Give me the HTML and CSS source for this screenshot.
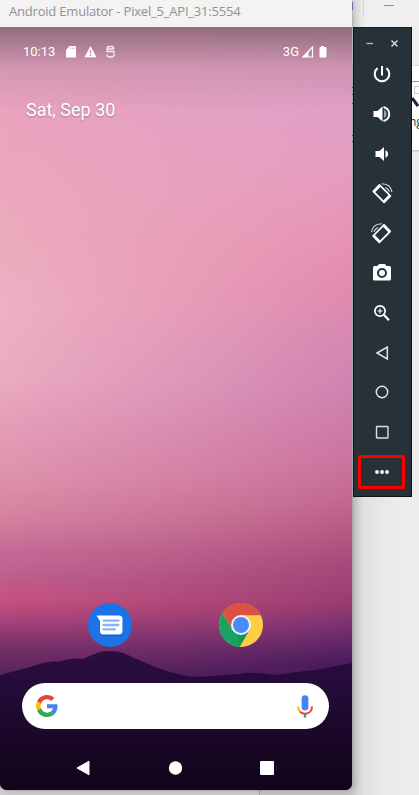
FILE: index.html
```html
<!DOCTYPE html>
<html lang="en">
<head>
<meta charset="utf-8">
<title>Android Emulator</title>
<link rel="stylesheet" href="styles.css">
</head>
<body>
<div class="desktop">
  <div class="background-window">
    <span class="accent"></span><span class="divider"></span><span class="minimize"></span>
    <div class="side-card"><div class="card-head"></div>
      <svg class="card-art" width="7" height="34" viewBox="412 82 7 34"><path d="M412 98l6 8" stroke="#23213d" stroke-width="3"/><rect x="414.500" y="86.500" width="8" height="7" fill="none" stroke="#ccc"/></svg>
      <span class="card-label">ng</span>
    </div>
    <svg class="edge-marks" width="2" height="60" viewBox="0 0 2 60"><path d="M1 2v1m0 6v1m0 8v1m0 31v1m0 5v1" stroke="#51545a" stroke-width="2"/></svg>
    <span class="lower-pane"></span>
  </div>
  <main class="emulator">
    <header class="titlebar">Android Emulator - Pixel_5_API_31:5554</header>
    <section class="screen">
      <div class="sky"></div><div class="sky sky-right"></div><div class="scrim"></div>
      <svg class="hills" width="352" height="140" viewBox="0 650 352 140">
        <defs><linearGradient id="hill" x1="0" y1="0" x2="0" y2="1"><stop stop-color="#2c0d40"/><stop offset=".3" stop-color="#230b38"/><stop offset=".65" stop-color="#1a0726"/><stop offset="1" stop-color="#10031a"/></linearGradient></defs>
        <path fill="url(#hill)" d="M0 675C15 671 23 669 30 667C43 662 52 661 60 661.500C68 659 77 658 82 659C91 656 98 651 108 651C122 651 126 654 134 658C149 664 163 671 186 676Q194 677 211 676Q225 675 239 674Q254 671 274 675Q305 671 321 669Q339 665 352 663V790H0Z"/>
      </svg>
      <div class="content">
        <div class="statusbar">
          <span>10:13</span>
          <svg class="status-left" width="52" height="14" viewBox="65 45 52 14"><path fill="#fff" d="M69.500 46H75q1 0 1 1v9.500q0 1-1 1h-8q-1 0-1-1V50z"/><path d="M70.500 47.500v1.700m2-1.700v1.700m2-1.700v1.700" stroke="#c897ae" stroke-width=".7"/><path fill="#fff" d="M90.500 46l6 11.300h-12z"/><path d="M90.500 50v3.500m0 1v1.500" stroke="#b78ba2" stroke-width="1.300"/><path d="M114 48.800Q113.500 46.500 111.500 46.500H109.500Q107 46.500 107 49V51.500H114V54.500Q114 57 111.500 57H109.500Q107 57 107 54.500M107 49h7" fill="none" stroke="#f7e9ef" stroke-width="1.300"/></svg>
          <span class="network">3G</span>
          <svg width="26" height="14" viewBox="302 45 26 14"><path d="M312.500 47v10H303z" fill="none" stroke="#fff" stroke-width="1.200"/><path fill="#fff" d="M308.500 51v6H302z"/><path fill="#fff" d="M321 46h3v1h1.500q1 0 1 1v8.500q0 1-1 1h-5q-1 0-1-1V48q0-1 1-1h.5z"/></svg>
        </div>
        <div class="date">Sat, Sep 30</div>
        <div class="apps">
          <svg width="44" height="44" viewBox="0 0 44 44"><circle cx="22" cy="22" r="22" fill="#1a73e8"/><path d="M10 14h21q4 0 4 4v11q0 4-4 4H17q-4 0-4-4V18z" fill="#0c4eac" opacity=".55"/><path fill="#fff" d="M8.500 12.500H31q3.500 0 3.500 3.500v12q0 3.500-3.500 3.500H15.500q-3.500 0-3.500-3.500V18z"/><path d="M15.500 17.700h15M15.500 22h15M15.500 26.300h11.500" stroke="#8ab4f8" stroke-width="2.300" stroke-linecap="round"/></svg>
          <svg width="44" height="44" viewBox="-22 -22 44 44"><circle r="22" fill="#ffcd42"/><path fill="#dd5144" d="M-18.500-11.900A22 22 0 0 1 19.700-9.800H0L-9 4z"/><path fill="#1ba262" d="M-18.500-11.900A22 22 0 0 0-1.500 22L8.500 4.900-8.500 4.900z"/><path fill="#148a50" opacity=".5" d="M-4 8L7.500 7L-1.500 22z"/><circle r="10" fill="#f1f5fb"/><circle r="8" fill="#4a8bf5"/></svg>
        </div>
        <div class="search">
          <svg width="22" height="22" viewBox="0 0 48 48"><path fill="#ea4335" d="M24 9.500c3.540 0 6.710 1.220 9.210 3.600l6.850-6.850C35.900 2.380 30.470 0 24 0 14.620 0 6.510 5.380 2.560 13.220l7.980 6.190C12.430 13.720 17.740 9.500 24 9.500z"/><path fill="#4285f4" d="M46.980 24.550c0-1.570-.15-3.090-.38-4.550H24v9.020h12.940c-.58 2.960-2.260 5.480-4.780 7.180l7.730 6c4.510-4.180 7.090-10.360 7.090-17.650z"/><path fill="#fbbc05" d="M10.530 28.590A14.500 14.500 0 0 1 9.770 24c0-1.600.27-3.140.76-4.590l-7.980-6.190A24 24 0 0 0 0 24c0 3.880.92 7.540 2.560 10.780z"/><path fill="#34a853" d="M24 48c6.480 0 11.930-2.130 15.890-5.810l-7.730-6c-2.150 1.450-4.920 2.300-8.160 2.300-6.260 0-11.570-4.220-13.470-9.910l-7.970 6.190C6.510 42.620 14.620 48 24 48z"/></svg>
          <svg width="18" height="23" viewBox="0 0 18 23"><path d="M9 19v3.500" stroke="#34a853" stroke-width="2.400"/><path d="M2 11.500q0 3.300 2.200 5.300" fill="none" stroke="#fbbc05" stroke-width="2"/><path d="M4.100 16.700q2 2 4.900 2c4.500 0 7-3.200 7-7.200" fill="none" stroke="#ea4335" stroke-width="2"/><rect x="5.600" y=".3" width="6.800" height="15" rx="3.400" fill="#4285f4"/></svg>
        </div>
        <svg class="navigation" width="352" height="16" viewBox="0 760 352 16"><path fill="#fff" stroke="#fff" stroke-linejoin="round" d="M77 768l12-6.800v13.600z"/><circle cx="175.500" cy="768" r="6.700" fill="#fff"/><rect x="260" y="761" width="14" height="14" rx="1" fill="#fff"/></svg>
      </div>
    </section>
  </main>
  <aside class="toolbar">
    <div class="window-controls"><svg width="57" height="26" viewBox="0 0 57 26"><path d="M12.500 15.500h6.500" stroke="#b7bbbe" stroke-width="1.300"/><path d="M37.500 12.500l6 6m0-6l-6 6" stroke="#e3e5e6" stroke-width="1.300"/></svg></div>
    <svg class="tool" viewBox="-12 -12 24 24"><path d="M-4.400-5.900a7.300 7.300 0 1 0 8.800 0M0-8V1.500" fill="none" stroke="#fff" stroke-width="2"/></svg>
    <svg class="tool" viewBox="-12 -12 24 24"><path fill="#fff" d="M-8.500-3h4L.5-7.500v15L-4.500 3h-4z"/><path d="M2-4.200q2.700 1.400 2.700 4.200T2 4.200z" fill="#9da3a6"/><path d="M1.500-7q5.700 1.600 5.700 7T1.500 7" fill="none" stroke="#fff" stroke-width="1.900"/></svg>
    <svg class="tool" viewBox="-12 -12 24 24"><path fill="#fff" d="M-6.500-3h4L2-7V7L-2.500 3h-4z"/><path d="M3.500-4q2.700 1.400 2.700 4t-2.700 4z" fill="#fff"/></svg>
    <svg class="tool" viewBox="-12 -12 24 24"><g id="rotate"><path d="M-8.700-1.700L-2.500-8.200 8.500 3 2.200 9.300z" fill="none" stroke="#fff" stroke-width="1.700" stroke-linejoin="round"/><path d="M-9.300-1.700L-2.500-8.800-.8-7.100-7.500-.1zM8.900 3L2.200 9.900.6 8.200 7.300 1.300z" fill="#fff"/><path d="M-.2-9.200Q8.800-9 10-.8M3.500-5.600Q6.500-4 7.500-1.200" fill="none" stroke="#dfe2e4" stroke-width="1.100"/></g></svg>
    <svg class="tool" viewBox="-12 -12 24 24"><use href="#rotate" transform="translate(-.5 0) scale(-1 1)"/></svg>
    <svg class="tool" viewBox="-12 -12 24 24"><path fill="#fff" fill-rule="evenodd" d="M-3-9h6l1.500 2H7.500q1.500 0 1.500 1.500V6q0 1.500-1.500 1.500h-15Q-9 7.500-9 6v-11.500Q-9-7-7.500-7h3zM0-5a5 5 0 1 0 0 10A5 5 0 0 0 0-5zm0 2a3 3 0 1 1 0 6 3 3 0 0 1 0-6z"/></svg>
    <svg class="tool" viewBox="-12 -12 24 24"><circle cx="-2" cy="-2" r="5.100" fill="none" stroke="#fff" stroke-width="1.700"/><path d="M1.800 1.800L7 7.300" stroke="#fff" stroke-width="2.200"/><path d="M-4.500-2H.5M-2-4.500V.5" stroke="#fff" stroke-width="1.200"/></svg>
    <svg class="tool" viewBox="-12 -12 24 24"><path d="M-5 0L5.300-6v12z" fill="none" stroke="#e2e5e7" stroke-width="1.500"/></svg>
    <svg class="tool" viewBox="-12 -12 24 24"><circle r="5.700" fill="none" stroke="#e2e5e7" stroke-width="1.500"/></svg>
    <svg class="tool" viewBox="-12 -12 24 24"><rect x="-5.500" y="-5.500" width="11.500" height="11.500" rx=".7" fill="none" stroke="#dce0e2" stroke-width="1.400"/></svg>
    <svg class="tool" viewBox="-12 -12 24 24"><g fill="#fff"><circle cx="-5" r="1.900"/><circle r="1.900"/><circle cx="5" r="1.900"/></g></svg>
    <span class="highlight"></span>
  </aside>
</div>
</body>
</html>
```

FILE: styles.css
```css
* { box-sizing: border-box; }
body { margin: 0; }
svg { display: block; flex-shrink: 0; }
.desktop { position: relative; width: 419px; height: 795px; overflow: hidden; background: #ededed; font-family: Roboto, sans-serif; }
.background-window { position: absolute; inset: 0; background: linear-gradient(90deg, #cacaca 352px, #e2e2e2 365px, #ebebeb 390px, #eee 419px); }
.background-window::before { content: ""; position: absolute; left: 352px; top: 0; width: 67px; height: 65px; background: linear-gradient(90deg, #dedede, #efefef 15px); }
.accent { position: absolute; left: 351px; top: 2px; width: 2px; height: 8px; background: #8c70d5; }
.divider { position: absolute; left: 363px; top: 0; width: 1px; height: 16px; background: #d2d2d2; }
.minimize { position: absolute; left: 384px; top: 5px; width: 10px; height: 1px; background: #8d8d8d; }
.side-card { position: absolute; left: 405px; top: 65px; width: 20px; height: 85px; background: #fff; border-top: 1px solid #ddd; box-shadow: 0 1px 2px #bbb; }
.card-head { height: 16px; border-bottom: 1px solid #999; }
.card-art { margin-left: 7px; }
.card-label { position: absolute; left: 4px; top: 47px; font: 12px "Open Sans", sans-serif; color: #333; }
.edge-marks { position: absolute; left: 351px; top: 85px; }
.lower-pane { position: absolute; left: 0; top: 789px; width: 260px; height: 6px; background: #d4d2d3; border-right: 1px solid #aaa; }
.emulator { position: absolute; left: 0; top: 0; width: 352px; height: 790px; border-radius: 0 0 7px 7px; overflow: hidden; box-shadow: 0 0 1px #555, 2px 1px 8px #0003; }
.titlebar { height: 27px; padding-left: 9px; background: #f3f3f3; color: #929292; font: 13px/22px "Open Sans", sans-serif; letter-spacing: -.2px; white-space: nowrap; }
.screen { position: relative; height: 763px; overflow: hidden; }
.sky, .scrim { position: absolute; inset: 0; }
.sky { background: linear-gradient(180deg, #e5a0bd 0, #eba5be 100px, #ecabbd 210px, #eeb0c3 280px, #ebabc1 353px, #e49db7 405px, #de91ab 455px, #d3809e 495px, #c46a96 525px, #bf5c8a 555px, #c7527f 573px, #a9457b 592px, #763067 620px, #53205b 655px); }
.sky-right { background: linear-gradient(176deg, #dc99bf 25px, #e09fc6 105px, #e59bbd 180px, #e592b2 240px, #e18bae 285px, #d588b1 335px, #cf82af 385px, #cb749f 455px, #c26890 495px, #b65a83 525px, #a44a7a 560px, #993c70 597px, #783170 622px, #4c1c5c 656px, #40184f 680px); mask-image: linear-gradient(90deg, transparent, #000); }
.scrim { height: 85px; background: linear-gradient(#936b7c, #bc8ca380 40px, transparent); }
.hills { position: absolute; left: 0; bottom: 0; }
.content { position: relative; height: 763px; display: flex; flex-direction: column; }
.statusbar { height: 50px; padding: 0 24px 0 23px; display: flex; align-items: center; color: #fff; font-size: 13px; line-height: 16px; }
.status-left { margin-left: 10px; }
.network { margin: 0 3px 0 auto; }
.date { margin: 21px 0 0 26px; height: 25px; color: #fff; font-size: 18px; line-height: 24px; text-shadow: 0 1px 2px #79566b88; }
.apps { display: flex; gap: 87px; margin: 480px 0 0 88px; }
.search { display: flex; align-items: center; justify-content: space-between; width: 307px; height: 46px; margin: 36px 0 0 22px; padding: 0 15px 0 14px; border-radius: 23px; background: #fff; }
.navigation { margin-top: 31px; }
.toolbar { position: absolute; left: 353px; top: 27px; width: 59px; height: 470px; background: #273238; border: 1px solid #0d1418; border-top-color: #182026; display: flex; flex-direction: column; align-items: center; gap: 15.8px; }
.window-controls { height: 18.200px; overflow: visible; }
.tool { width: 24px; height: 24px; margin-right: 2px; }
.highlight { position: absolute; left: 4px; top: 427px; width: 47px; height: 34px; border: 3.500px solid #f00; border-radius: 2px; }
```
